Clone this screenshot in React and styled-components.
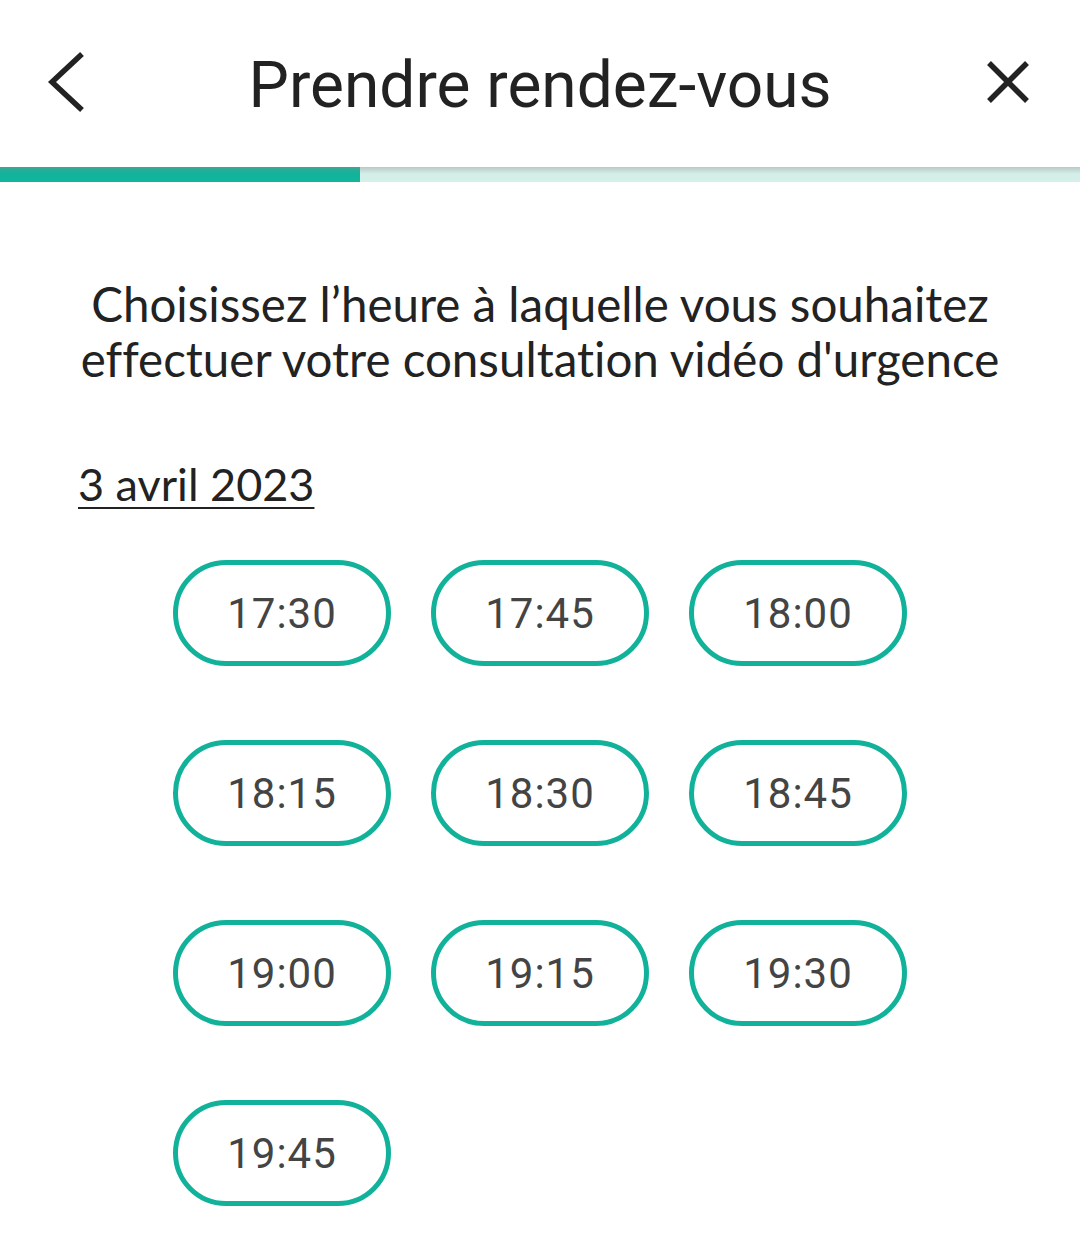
import React from "react";
import styled, { createGlobalStyle } from "styled-components";

const Global = createGlobalStyle`
  html, body { margin: 0; padding: 0; background: #ffffff; }
  body { font-family: "Lato", "Noto Sans", sans-serif; }
`;

const Page = styled.div`
  width: 1080px;
  min-height: 1251px;
  background: #fff;
  display: flex;
  flex-direction: column;
`;

const Header = styled.header`
  height: 167px;
  display: grid;
  grid-template-columns: 140px 1fr 140px;
  align-items: center;
`;

const IconButton = styled.button`
  border: none;
  background: none;
  padding: 0;
  display: flex;
  align-items: center;
  justify-content: ${(p) => p.$align};
  padding-left: ${(p) => (p.$align === "flex-start" ? "46px" : "0")};
  padding-right: ${(p) => (p.$align === "flex-end" ? "50px" : "0")};
  margin-top: -4px;
  cursor: pointer;
`;

const Title = styled.h1`
  margin: 0;
  margin-top: 4px;
  text-align: center;
  font-family: "Roboto", "Noto Sans", sans-serif;
  font-weight: 400;
  font-size: 64px;
  color: #222;
`;

const Progress = styled.div`
  height: 15px;
  display: flex;
  background: linear-gradient(#b9c9c5, #d3eee8 45%, #d6efea);
`;

const ProgressFill = styled.div`
  height: 100%;
  background: linear-gradient(#3aa898, #12b39a 45%, #10b69c);
`;

const Content = styled.main`
  display: flex;
  flex-direction: column;
  padding: 94px 78px 0;
`;

const Intro = styled.p`
  margin: 0;
  text-align: center;
  font-size: 47.5px;
  line-height: 55px;
  color: #222;
  font-weight: 400;
  font-variant-ligatures: none;
  white-space: nowrap;
`;

const DateLabel = styled.a`
  align-self: flex-start;
  margin-top: 70px;
  font-size: 45px;
  line-height: 56px;
  color: #222;
  text-decoration: underline;
  text-decoration-thickness: 2px;
  text-underline-offset: 6px;
`;

const Slots = styled.div`
  margin-top: 48px;
  align-self: center;
  display: grid;
  grid-template-columns: repeat(3, 218px);
  column-gap: 40px;
  row-gap: 74px;
`;

const Slot = styled.button`
  height: 106px;
  box-sizing: border-box;
  border: 5px solid #12b29a;
  border-radius: 53px;
  background: #fff;
  font-family: "Roboto", "Noto Sans", sans-serif;
  font-size: 42px;
  color: #444;
  cursor: pointer;
  padding: 0;
  letter-spacing: 1px;
`;

const times = [
  "17:30", "17:45", "18:00",
  "18:15", "18:30", "18:45",
  "19:00", "19:15", "19:30",
  "19:45",
];

export default function App() {
  const progress = 1 / 3;
  return (
    <>
      <Global />
      <Page>
        <Header>
          <IconButton $align="flex-start" aria-label="Retour">
            <svg width="40" height="62" viewBox="0 0 40 62">
              <path d="M36 3 L6 31 L36 59" fill="none" stroke="#222" strokeWidth="5.5" />
            </svg>
          </IconButton>
          <Title>Prendre rendez-vous</Title>
          <IconButton $align="flex-end" aria-label="Fermer">
            <svg width="44" height="44" viewBox="0 0 44 44">
              <path d="M3 3 L41 41 M41 3 L3 41" fill="none" stroke="#222" strokeWidth="5.5" />
            </svg>
          </IconButton>
        </Header>
        <Progress>
          <ProgressFill style={{ width: `${progress * 100}%` }} />
        </Progress>
        <Content>
          <Intro>
            Choisissez l’heure à laquelle vous souhaitez
            <br />
            effectuer votre consultation vidéo d'urgence
          </Intro>
          <DateLabel>3 avril 2023</DateLabel>
          <Slots>
            {times.map((t) => (
              <Slot key={t}>{t}</Slot>
            ))}
          </Slots>
        </Content>
      </Page>
    </>
  );
}
